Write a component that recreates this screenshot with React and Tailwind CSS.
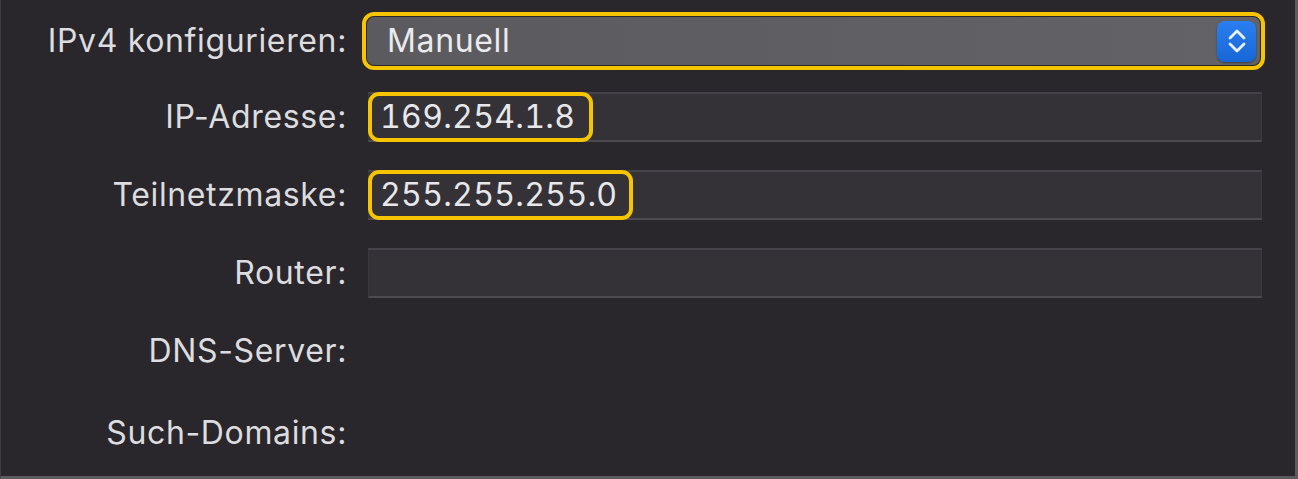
import React from "react";

const font = { fontFamily: "Inter, 'Noto Sans', sans-serif" };

function Label({ children }) {
  return (
    <div className="w-[347px] shrink-0 text-right text-[32px] tracking-[0.02em] text-[#dddcdf] leading-none pr-[1px]">
      {children}
    </div>
  );
}

function Field({ children }) {
  return (
    <div className="ml-[20px] w-[894px] h-[50px] flex items-stretch bg-[#343237] border-t-2 border-b-2 border-t-[#46444a] border-b-[#4d4b50] border-x border-x-[#3b393e]">
      {children}
    </div>
  );
}

function Highlight({ w, children }) {
  return (
    <div
      className={`${w} -my-[2px] -ml-[1px] flex items-center border-[4px] border-[#f7c400] rounded-[11px] pl-[8px] text-[32px] tracking-[0.01em] tabular-nums text-[#e8e7ea] leading-none`}
    >
      {children}
    </div>
  );
}

export default function App() {
  return (
    <div
      style={font}
      className="w-[1298px] h-[479px] bg-[#29272c] border-l border-l-[#3d3c40] border-r-[3px] border-r-[#5c5b5f] border-b-[3px] border-b-[#5c5b5f] flex flex-col pt-[12px] overflow-hidden"
    >
      {/* Row 1: select */}
      <div className="h-[58px] flex items-center">
        <Label>IPv4 konfigurieren:</Label>
        <div className="ml-[14px] w-[903px] h-[58px] border-[4px] border-[#f7c400] rounded-[12px] p-[1px]">
          <div className="h-full w-full rounded-[7px] bg-gradient-to-r from-[#5b5a5f] to-[#636267] flex items-center justify-between pl-[20px] pr-[4px]">
            <span className="text-[32px] tracking-[0.02em] text-[#ebeaed] leading-none">Manuell</span>
            <div className="w-[39px] h-[41px] rounded-[8px] bg-gradient-to-b from-[#2a7ff0] to-[#1766d6] flex items-center justify-center shadow-[0_1px_2px_rgba(0,0,0,0.4)]">
              <svg width="20" height="28" viewBox="0 0 20 28" fill="none">
                <path d="M3 11 L10 4 L17 11" stroke="#eaf2ff" strokeWidth="2.8" strokeLinecap="round" strokeLinejoin="round" />
                <path d="M3 17 L10 24 L17 17" stroke="#eaf2ff" strokeWidth="2.8" strokeLinecap="round" strokeLinejoin="round" />
              </svg>
            </div>
          </div>
        </div>
      </div>

      {/* Row 2: IP-Adresse */}
      <div className="mt-[22px] h-[50px] flex items-center">
        <Label>IP-Adresse:</Label>
        <Field>
          <Highlight w="w-[225px]">169.254.1.8</Highlight>
        </Field>
      </div>

      {/* Row 3: Teilnetzmaske */}
      <div className="mt-[28px] h-[50px] flex items-center">
        <Label>Teilnetzmaske:</Label>
        <Field>
          <Highlight w="w-[265px]">255.255.255.0</Highlight>
        </Field>
      </div>

      {/* Row 4: Router */}
      <div className="mt-[28px] h-[50px] flex items-center">
        <Label>Router:</Label>
        <Field />
      </div>

      {/* Row 5: DNS-Server */}
      <div className="mt-[28px] h-[50px] flex items-center">
        <Label>DNS-Server:</Label>
      </div>

      {/* Row 6: Such-Domains */}
      <div className="mt-[32px] h-[50px] flex items-center">
        <Label>Such-Domains:</Label>
      </div>
    </div>
  );
}
